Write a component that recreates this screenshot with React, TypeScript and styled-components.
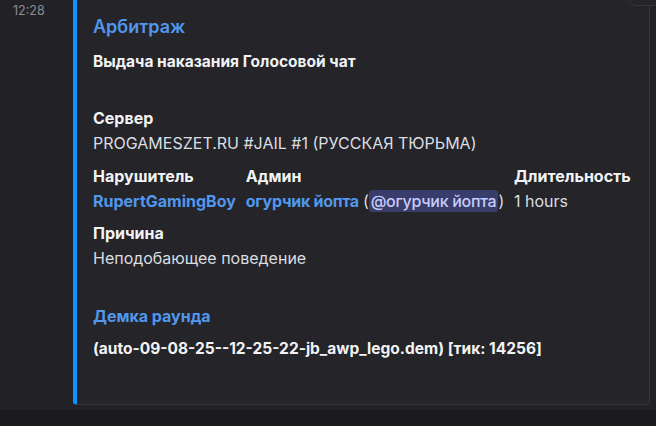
import React from 'react'
import styled, { createGlobalStyle } from 'styled-components'

const Global = createGlobalStyle`
  html, body {
    margin: 0;
    padding: 0;
    background: #222226;
    overflow: hidden;
  }
  body {
    font-family: 'Inter', 'Noto Sans', sans-serif;
    -webkit-font-smoothing: antialiased;
  }
`

const Page = styled.div`
  width: 656px;
  height: 426px;
  display: flex;
  flex-direction: column;
  background: #222226;
`

const Message = styled.div`
  flex: 1;
  display: flex;
  position: relative;
`

const Gutter = styled.div`
  width: 73px;
  flex-shrink: 0;
  padding: 4px 0 0 13px;
  box-sizing: border-box;
`

const Time = styled.div`
  font-size: 12.5px;
  line-height: 14px;
  color: #8c8d94;
`

const ActionBar = styled.div`
  position: absolute;
  right: -20px;
  top: -14px;
  width: 46px;
  height: 18px;
  border: 1px solid #35363c;
  border-radius: 8px;
  background: #242429;
`

const Embed = styled.div`
  width: 577px;
  height: 405px;
  box-sizing: border-box;
  background: #242429;
  border: 1px solid #35363c;
  border-left: 4px solid #0d95fd;
  border-top: none;
  border-radius: 0 0 4px 4px;
  padding: 15px 16px 0 16px;
  display: flex;
  flex-direction: column;
`

const Title = styled.div`
  font-size: 18px;
  line-height: 24px;
  font-weight: 600;
  color: #5197ed;
`

const Description = styled.div`
  margin-top: 12px;
  font-size: 15.5px;
  line-height: 22px;
  font-weight: 700;
  color: #f2f3f5;
`

const Field = styled.div<{ $gap?: number }>`
  display: flex;
  flex-direction: column;
  margin-top: ${p => p.$gap ?? 10}px;
`

const FieldRow = styled.div`
  display: flex;
  gap: 10px;
  margin-top: 11px;
`

const Name = styled.div`
  font-size: 16px;
  line-height: 22px;
  font-weight: 700;
  color: #f2f3f5;
  white-space: nowrap;
`

const Value = styled.div<{ $tight?: boolean }>`
  margin-top: 3px;
  font-size: 16px;
  line-height: 22px;
  color: #dbdee1;
  white-space: nowrap;
  letter-spacing: ${p => (p.$tight ? '-0.28px' : 'normal')};
`

const Link = styled.span`
  font-weight: 700;
  color: #5197ed;
`

const Mention = styled.span`
  background: #383d6c;
  color: #c9cdfb;
  border-radius: 3px;
  padding: 1px 2px;
  font-weight: 500;
`

const Strong = styled.div`
  margin-top: 11px;
  font-size: 15.5px;
  line-height: 22px;
  font-weight: 700;
  color: #f2f3f5;
`

const Footer = styled.div`
  height: 16px;
  background: #1b1b1f;
`

export default function App() {
  return (
    <Page>
      <Global />
      <Message>
        <Gutter>
          <Time>12:28</Time>
        </Gutter>
        <Embed>
          <Title>Арбитраж</Title>
          <Description>Выдача наказания Голосовой чат</Description>
          <Field $gap={34}>
            <Name>Сервер</Name>
            <Value>PROGAMESZET.RU #JAIL #1 (РУССКАЯ ТЮРЬМА)</Value>
          </Field>
          <FieldRow>
            <div>
              <Name>Нарушитель</Name>
              <Value><Link>RupertGamingBoy</Link></Value>
            </div>
            <div>
              <Name>Админ</Name>
              <Value $tight>
                <Link>огурчик йопта</Link> (<Mention>@огурчик йопта</Mention>)
              </Value>
            </div>
            <div>
              <Name>Длительность</Name>
              <Value>1 hours</Value>
            </div>
          </FieldRow>
          <Field>
            <Name>Причина</Name>
            <Value>Неподобающее поведение</Value>
          </Field>
          <Field $gap={36}>
            <Name><Link>Демка раунда</Link></Name>
            <Strong>(auto-09-08-25--12-25-22-jb_awp_lego.dem) [тик: 14256]</Strong>
          </Field>
        </Embed>
        <ActionBar />
      </Message>
      <Footer />
    </Page>
  )
}
